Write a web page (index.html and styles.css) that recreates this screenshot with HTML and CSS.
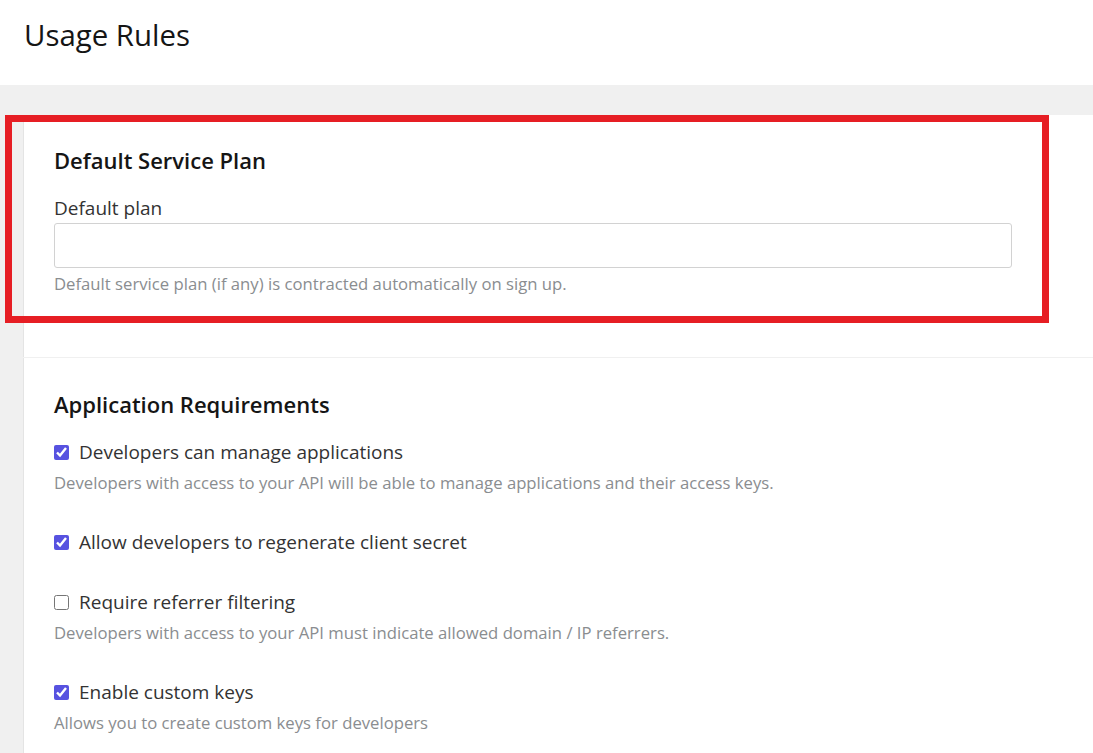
FILE: index.html
```html
<!DOCTYPE html>
<html lang="en">
<head>
<meta charset="utf-8">
<title>Usage Rules</title>
<link rel="stylesheet" href="styles.css">
</head>
<body>
<header class="page-header">
  <h1 class="page-title">Usage Rules</h1>
</header>
<main class="page-body">
  <section class="card card-plan">
    <h2 class="card-title">Default Service Plan</h2>
    <label class="field-label" for="plan">Default plan</label>
    <input class="text-input" id="plan" type="text">
    <p class="help">Default service plan (if any) is contracted automatically on sign up.</p>
  </section>
  <section class="card card-apps">
    <h2 class="card-title">Application Requirements</h2>
    <div class="check-item">
      <label class="check-row"><input type="checkbox" class="check" checked> <span>Developers can manage applications</span></label>
      <p class="help check-help">Developers with access to your API will be able to manage applications and their access keys.</p>
    </div>
    <div class="check-item">
      <label class="check-row"><input type="checkbox" class="check" checked> <span>Allow developers to regenerate client secret</span></label>
    </div>
    <div class="check-item">
      <label class="check-row"><input type="checkbox" class="check"> <span>Require referrer filtering</span></label>
      <p class="help check-help">Developers with access to your API must indicate allowed domain / IP referrers.</p>
    </div>
    <div class="check-item">
      <label class="check-row"><input type="checkbox" class="check" checked> <span>Enable custom keys</span></label>
      <p class="help check-help">Allows you to create custom keys for developers</p>
    </div>
  </section>
  <div class="highlight" aria-hidden="true"></div>
</main>
</body>
</html>
```
FILE: styles.css
```css
* { box-sizing: border-box; }
html, body { margin: 0; padding: 0; }
body {
  font-family: "Open Sans", "Noto Sans", sans-serif;
  color: #151515;
  background: #f0f0f0;
}
.page-header {
  background: #fff;
  height: 85px;
  padding: 15px 24px 0;
}
.page-title {
  margin: 0;
  font-weight: 400;
  font-size: 29.4px;
  line-height: 40px;
}
.page-body {
  position: relative;
  padding: 30px 0 0 23px;
}
.card {
  background: #fff;
  padding: 0 81px 0 30px;
  border-left: 1px solid #e4e4e4;
}
.card-plan {
  height: 242px;
  padding-top: 30px;
  margin-bottom: 1px;
}
.card-apps {
  padding-top: 31px;
  padding-bottom: 30px;
}
.card-title {
  margin: 0 0 18px;
  font-size: 22px;
  font-weight: 600;
  line-height: 30px;
}
.field-label {
  display: block;
  font-size: 19px;
  line-height: 30px;
  color: #333;
}
.text-input {
  display: block;
  width: 100%;
  height: 45px;
  border: 1px solid #d2d2d2;
  border-radius: 3px;
  font: inherit;
  padding: 0 10px;
}
.help {
  margin: 5px 0 0;
  font-size: 16.7px;
  line-height: 22px;
  color: #8a8d90;
}
.check-item {
  margin-bottom: 30px;
}
.check-row {
  display: flex;
  align-items: center;
  gap: 10px;
  font-size: 19px;
  line-height: 30px;
  color: #333;
}
.check {
  margin: 0;
  width: 15px;
  height: 15px;
  accent-color: #5752e0;
}
.check-help {
  margin: 5px 0 0;
  padding-bottom: 3px;
}
.highlight {
  position: absolute;
  left: 5px;
  top: 30px;
  width: 1044px;
  height: 208px;
  border: 7px solid #e61e24;
}
```
